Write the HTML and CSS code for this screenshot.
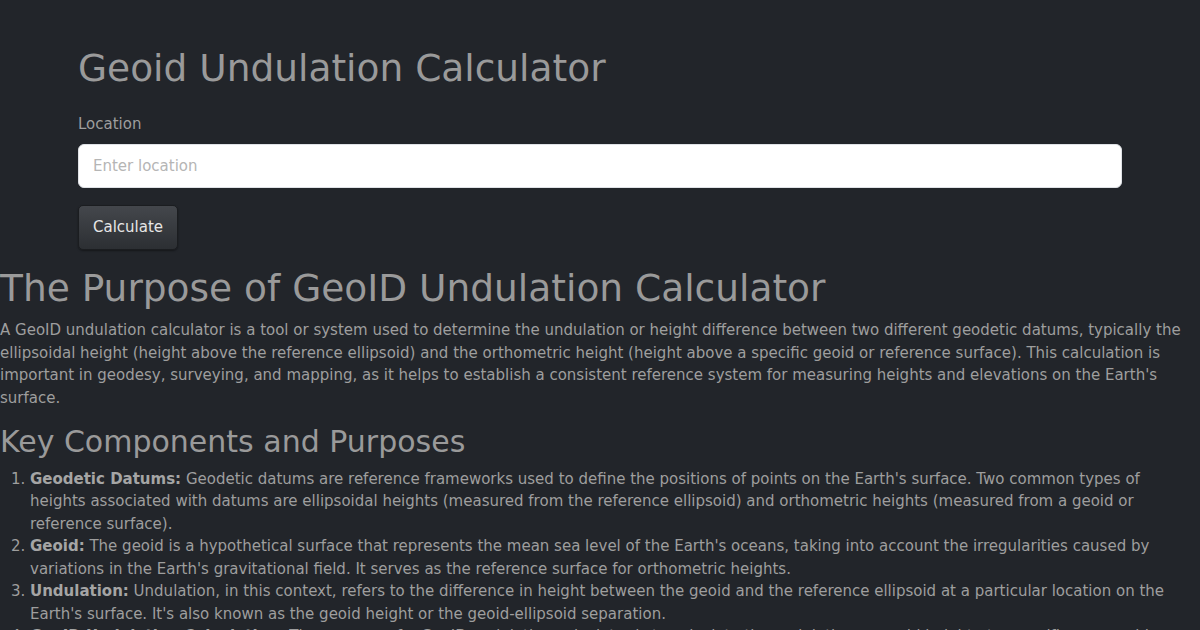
FILE: index.html
```html
<!DOCTYPE html>
<html lang="en">
<head>
<meta charset="utf-8">
<title>Geoid Undulation Calculator</title>
<link rel="stylesheet" href="styles.css">
</head>
<body>
<main class="calc">
  <h1 class="calc-title">Geoid Undulation Calculator</h1>
  <form class="calc-form">
    <label class="calc-label" for="loc">Location</label>
    <input class="calc-input" id="loc" type="text" placeholder="Enter location">
    <button class="calc-btn" type="button">Calculate</button>
  </form>
</main>
<section class="article">
  <h2 class="article-title">The Purpose of GeoID Undulation Calculator</h2>
  <p class="article-text">A GeoID undulation calculator is a tool or system used to determine the undulation or height difference between two different geodetic datums, typically the ellipsoidal height (height above the reference ellipsoid) and the orthometric height (height above a specific geoid or reference surface). This calculation is important in geodesy, surveying, and mapping, as it helps to establish a consistent reference system for measuring heights and elevations on the Earth's surface.</p>
  <h3 class="article-sub">Key Components and Purposes</h3>
  <ol class="article-list">
    <li><strong>Geodetic Datums:</strong> Geodetic datums are reference frameworks used to define the positions of points on the Earth's surface. Two common types of heights associated with datums are ellipsoidal heights (measured from the reference ellipsoid) and orthometric heights (measured from a geoid or reference surface).</li>
    <li><strong>Geoid:</strong> The geoid is a hypothetical surface that represents the mean sea level of the Earth's oceans, taking into account the irregularities caused by variations in the Earth's gravitational field. It serves as the reference surface for orthometric heights.</li>
    <li><strong>Undulation:</strong> Undulation, in this context, refers to the difference in height between the geoid and the reference ellipsoid at a particular location on the Earth's surface. It's also known as the geoid height or the geoid-ellipsoid separation.</li>
    <li><strong>GeoID Undulation Calculation:</strong> The purpose of a GeoID undulation calculator is to calculate the undulation or geoid height at a specific geographic location, which is needed to convert between ellipsoidal and orthometric heights.</li>
  </ol>
</section>
</body>
</html>
```
FILE: styles.css
```css
html {
  font-size: 15px;
}
html, body {
  margin: 0;
  padding: 0;
}
body {
  background: #22252a;
  color: #9e9e9e;
  font-family: "DejaVu Sans", "Liberation Sans", sans-serif;
  font-size: 15px;
  line-height: 1.5;
}
.calc {
  width: 1044px;
  margin: 0 auto;
  padding-top: 46px;
}
.calc-title {
  margin: 0 0 22px;
  font-size: 37.5px;
  font-weight: 400;
  line-height: 1.2;
  color: #9a9a9a;
}
.calc-form {
  display: flex;
  flex-direction: column;
  align-items: flex-start;
}
.calc-label {
  margin-bottom: 8px;
  color: #9e9e9e;
}
.calc-input {
  box-sizing: border-box;
  width: 100%;
  height: 44px;
  padding: 0 14px;
  border: 1px solid #dfe2e6;
  border-radius: 6px;
  background: #fff;
  font-family: inherit;
  font-size: 15px;
  color: #333;
  outline: none;
}
.calc-input::placeholder {
  color: #b5b5b5;
}
.calc-btn {
  margin-top: 17px;
  height: 45px;
  padding: 0 14px;
  border: 1px solid #1b1d20;
  border-radius: 5px;
  background: linear-gradient(#44474c, #2c2f33);
  color: #e6e6e6;
  font-family: inherit;
  font-size: 15px;
  box-shadow: 0 1px 2px rgba(0,0,0,0.4);
}
.article {
  padding-top: 16px;
}
.article-title {
  margin: 0 0 8.5px;
  font-size: 37.5px;
  font-weight: 400;
  line-height: 1.2;
  color: #9a9a9a;
}
.article-text {
  margin: 0 0 15px;
}
.article-sub {
  margin: 0 0 7.5px;
  font-size: 30px;
  font-weight: 400;
  line-height: 1.2;
  color: #9a9a9a;
}
.article-list {
  margin: 0;
  padding-left: 30px;
}
.article-list strong {
  font-weight: 700;
  color: #a5a5a5;
}
```
